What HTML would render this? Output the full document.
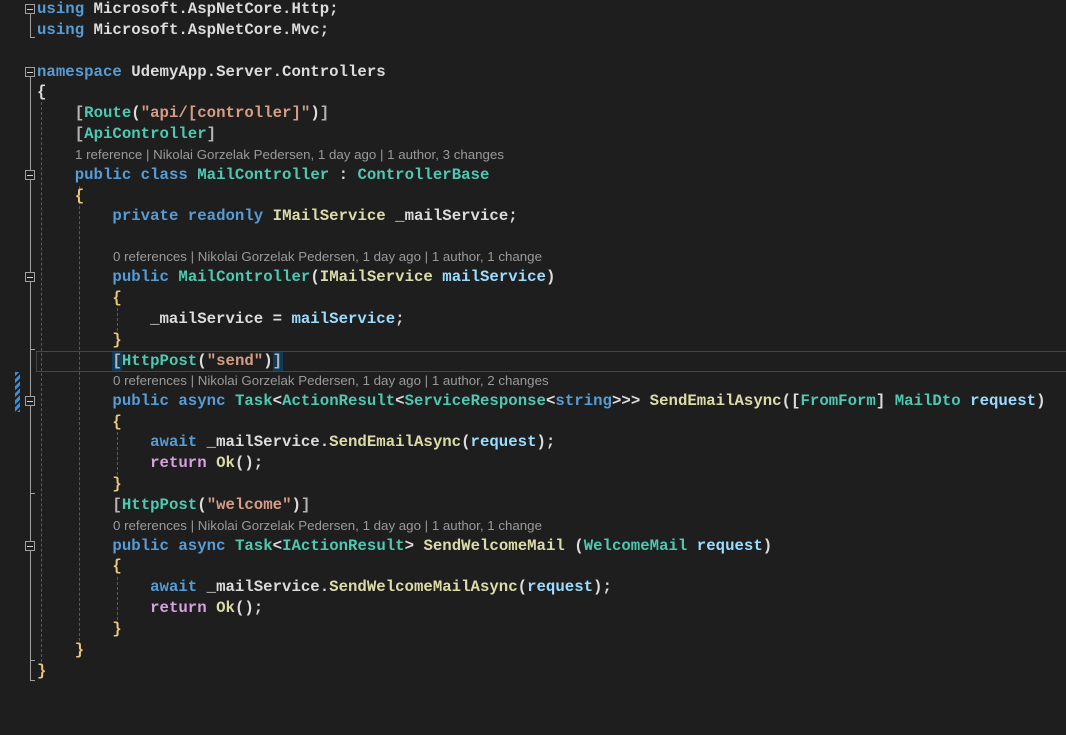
<!DOCTYPE html>
<html><head><meta charset="utf-8"><style>
html,body{margin:0;padding:0;background:#1e1e1e;width:1066px;height:735px;overflow:hidden;position:relative}
.l{position:absolute;left:37px;height:21px;line-height:21px;white-space:pre;font-family:"Liberation Mono",monospace;font-size:15.7px;color:#dcdcdc;font-weight:bold;letter-spacing:0.01px}
.c{position:absolute;white-space:pre;font-family:"Liberation Sans",sans-serif;font-size:13.3px;color:#9a9a9a;height:16px;line-height:16px}
.k{color:#569cd6}.t{color:#4ec9b0}.s{color:#d69d85}.p{color:#9cdcfe}.m{color:#dcdcaa}.r{color:#d8a0df}.b{color:#e8c67b}.g{color:#b4b4b4}
.v{position:absolute;width:0;border-left:1px dashed #5a5a5a}
.f{position:absolute;left:25px;width:8px;height:8px;border:1px solid #a0a0a0;background:#1e1e1e}
.f:after{content:"";position:absolute;left:1px;top:3.5px;width:6px;height:1px;background:#d0d0d0}
.sl{position:absolute;left:30px;width:1px;background:#a0a0a0}
.tk{position:absolute;left:30px;width:5px;height:1px;background:#a0a0a0}
</style></head><body>
<div class="sl" style="top:14px;height:24px"></div><div class="tk" style="top:37px"></div>
<div class="sl" style="top:77px;height:604px"></div><div class="tk" style="top:680px"></div>
<div class="tk" style="top:660px"></div><div class="tk" style="top:493px"></div><div class="tk" style="top:349px"></div>
<div class="v" style="left:41px;top:102px;height:560px"></div>
<div class="v" style="left:79px;top:186px;height:455px"></div>
<div class="v" style="left:117px;top:308px;height:23px"></div>
<div class="v" style="left:117px;top:432px;height:43px"></div>
<div class="v" style="left:117px;top:577px;height:43px"></div>
<div class="f" style="top:4px"></div>
<div class="f" style="top:67px"></div>
<div class="f" style="top:170px"></div>
<div class="f" style="top:272px"></div>
<div class="f" style="top:396px"></div>
<div class="f" style="top:541px"></div>
<div style="position:absolute;left:15px;top:372px;width:5px;height:40px;background:repeating-linear-gradient(135deg,#3b8fd6 0 3px,#1e1e1e 3px 5px)"></div>
<div style="position:absolute;left:36px;top:351px;width:1040px;height:19px;border:1px solid #464646"></div>
<div style="position:absolute;left:112px;top:352px;width:10px;height:19px;background:#0e3a5a"></div>
<div style="position:absolute;left:273px;top:352px;width:10px;height:19px;background:#0e3a5a"></div>

<div class="l" style="top:-1px"><span class="k">using</span> Microsoft.AspNetCore.Http;</div>
<div class="l" style="top:20px"><span class="k">using</span> Microsoft.AspNetCore.Mvc;</div>
<div class="l" style="top:62px"><span class="k">namespace</span> UdemyApp.Server.Controllers</div>
<div class="l" style="top:82px">{</div>
<div class="l" style="top:103px">    <span class="g">[</span><span class="t">Route</span>(<span class="s">"api/[controller]"</span>)<span class="g">]</span></div>
<div class="l" style="top:124px">    <span class="g">[</span><span class="t">ApiController</span><span class="g">]</span></div>
<div class="c" style="left:75px;top:147px">1 reference | Nikolai Gorzelak Pedersen, 1 day ago | 1 author, 3 changes</div>
<div class="l" style="top:165px">    <span class="k">public class</span> <span class="t">MailController</span> : <span class="t">ControllerBase</span></div>
<div class="l" style="top:186px">    <span class="b">{</span></div>
<div class="l" style="top:206px">        <span class="k">private readonly</span> <span class="m">IMailService</span> _mailService;</div>
<div class="c" style="left:113px;top:249px">0 references | Nikolai Gorzelak Pedersen, 1 day ago | 1 author, 1 change</div>
<div class="l" style="top:267px">        <span class="k">public</span> <span class="t">MailController</span>(<span class="m">IMailService</span> <span class="p">mailService</span>)</div>
<div class="l" style="top:288px">        <span class="b">{</span></div>
<div class="l" style="top:309px">            _mailService = <span class="p">mailService</span>;</div>
<div class="l" style="top:330px">        <span class="b">}</span></div>
<div class="l" style="top:351px">        <span class="g">[</span><span class="t">HttpPost</span>(<span class="s">"send"</span>)<span class="g">]</span></div>
<div class="c" style="left:113px;top:373px">0 references | Nikolai Gorzelak Pedersen, 1 day ago | 1 author, 2 changes</div>
<div class="l" style="top:391px">        <span class="k">public async</span> <span class="t">Task</span>&lt;<span class="t">ActionResult</span>&lt;<span class="t">ServiceResponse</span>&lt;<span class="k">string</span>&gt;&gt;&gt; <span class="m">SendEmailAsync</span>([<span class="t">FromForm</span>] <span class="t">MailDto</span> <span class="p">request</span>)</div>
<div class="l" style="top:412px">        <span class="b">{</span></div>
<div class="l" style="top:432px">            <span class="k">await</span> _mailService.<span class="m">SendEmailAsync</span>(<span class="p">request</span>);</div>
<div class="l" style="top:453px">            <span class="r">return</span> <span class="m">Ok</span>();</div>
<div class="l" style="top:474px">        <span class="b">}</span></div>
<div class="l" style="top:495px">        <span class="g">[</span><span class="t">HttpPost</span>(<span class="s">"welcome"</span>)<span class="g">]</span></div>
<div class="c" style="left:113px;top:518px">0 references | Nikolai Gorzelak Pedersen, 1 day ago | 1 author, 1 change</div>
<div class="l" style="top:536px">        <span class="k">public async</span> <span class="t">Task</span>&lt;<span class="t">IActionResult</span>&gt; <span class="m">SendWelcomeMail</span> (<span class="t">WelcomeMail</span> <span class="p">request</span>)</div>
<div class="l" style="top:556px">        <span class="b">{</span></div>
<div class="l" style="top:577px">            <span class="k">await</span> _mailService.<span class="m">SendWelcomeMailAsync</span>(<span class="p">request</span>);</div>
<div class="l" style="top:598px">            <span class="r">return</span> <span class="m">Ok</span>();</div>
<div class="l" style="top:619px">        <span class="b">}</span></div>
<div class="l" style="top:640px">    <span class="b">}</span></div>
<div class="l" style="top:661px"><span class="b">}</span></div>
</body></html>
